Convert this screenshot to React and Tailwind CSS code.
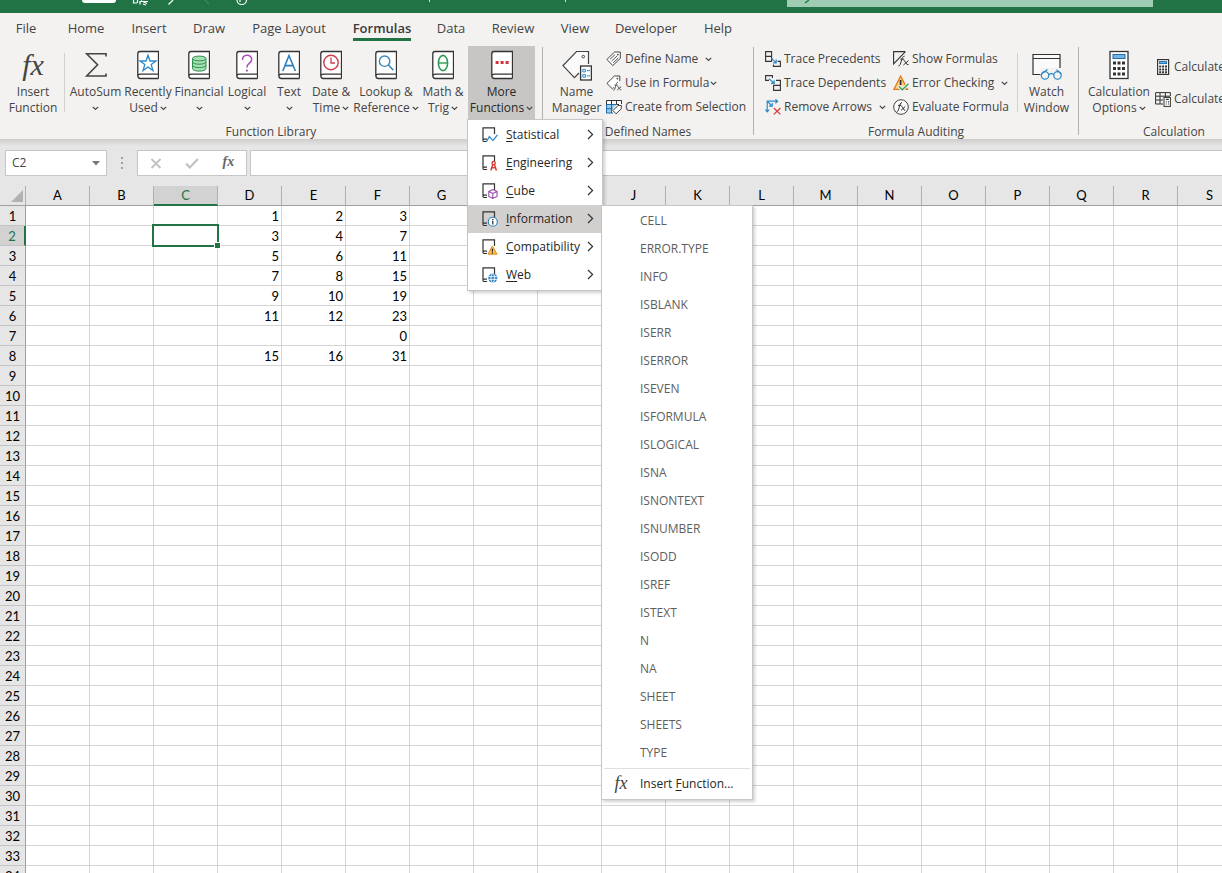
import React, { useState } from 'react';
import clsx from 'clsx';

const tabs = [
  { label: 'File', width: 'w-[52px]' },
  { label: 'Home', width: 'w-[68px]' },
  { label: 'Insert', width: 'w-[58px]' },
  { label: 'Draw', width: 'w-[62px]' },
  { label: 'Page Layout', width: 'w-[98px]' },
  { label: 'Formulas', width: 'w-[88px]' },
  { label: 'Data', width: 'w-[50px]' },
  { label: 'Review', width: 'w-[74px]' },
  { label: 'View', width: 'w-[50px]' },
  { label: 'Developer', width: 'w-[92px]' },
  { label: 'Help', width: 'w-[52px]' },
];

const columns = 'ABCDEFGHIJKLMNOPQRS'.split('');
const rows = Array.from({ length: 34 }, (_, i) => i + 1);

const values = {
  D1: 1, E1: 2, F1: 3,
  D2: 3, E2: 4, F2: 7,
  D3: 5, E3: 6, F3: 11,
  D4: 7, E4: 8, F4: 15,
  D5: 9, E5: 10, F5: 19,
  D6: 11, E6: 12, F6: 23,
  F7: 0,
  D8: 15, E8: 16, F8: 31,
};

const infoFunctions = [
  'CELL', 'ERROR.TYPE', 'INFO', 'ISBLANK', 'ISERR', 'ISERROR', 'ISEVEN', 'ISFORMULA', 'ISLOGICAL', 'ISNA',
  'ISNONTEXT', 'ISNUMBER', 'ISODD', 'ISREF', 'ISTEXT', 'N', 'NA', 'SHEET', 'SHEETS', 'TYPE',
];

const Chevron = ({ className }) => (
  <svg width="7" height="5" viewBox="0 0 7 5" className={clsx('inline-block shrink-0', className)} fill="none" stroke="#444" strokeWidth="1.2">
    <path d="M0.8 0.9 3.5 3.5 6.2 0.9" />
  </svg>
);

const Fx = ({ className }) => (
  <span className={clsx('font-["Liberation_Serif",serif] italic leading-none', className)}>fx</span>
);

/* Large book used by the function library buttons */
const Book = ({ children }) => (
  <svg width="22" height="30" viewBox="0 0 22 30" fill="none">
    <path d="M3 1.5H21.5V28.5H3.5Q0.8 28.5 0.8 25.5V4Q0.8 1.5 3 1.5Z" fill="#fff" />
    <path d="M21.5 28.5V1.5H3Q0.8 1.5 0.8 4V25.5Q0.8 28.5 3.5 28.5H21.5M21.5 24.2H3.5Q0.9 24.2 0.9 26" stroke="#333" strokeWidth="1.3" />
    {children}
  </svg>
);

const SigmaIcon = () => (
  <svg width="22" height="30" viewBox="0 0 22 30" fill="none" stroke="#444" strokeWidth="1.6">
    <path d="M21 6.5V3.8H1.6L12.6 14.8 1.6 26H21V23.4" />
  </svg>
);

const StarBook = () => (
  <Book>
    <path d="M11 5.2 13 11H19L14.2 14.6 16 20.6 11 17 6 20.6 7.8 14.6 3 11H9Z" stroke="#2b88c8" strokeWidth="1.3" />
  </Book>
);

const CoinBook = () => (
  <Book>
    <path d="M4.5 8.5V18.5C4.5 22 18 22 18 18.5V8.5" fill="#a6dfb4" stroke="#2f8f4e" />
    <ellipse cx="11.25" cy="8.5" rx="6.75" ry="2.4" fill="#a6dfb4" stroke="#2f8f4e" />
    <path d="M4.5 11.8C4.5 15 18 15 18 11.8M4.5 15.2C4.5 18.4 18 18.4 18 15.2" stroke="#2f8f4e" />
  </Book>
);

const QuestionBook = () => (
  <Book>
    <path d="M6.5 10C6.5 3.8 15.7 4 15.7 9.4 15.7 13.2 10.9 13 10.9 17.4" stroke="#a44fb5" strokeWidth="1.5" />
    <circle cx="10.9" cy="20.6" r="1.1" fill="#a44fb5" />
  </Book>
);

const LetterBook = () => (
  <Book>
    <path d="M4.8 21 11 5.5 17.4 21M7 15.6H15.2" stroke="#2b7fbd" strokeWidth="1.6" />
  </Book>
);

const ClockBook = () => (
  <Book>
    <circle cx="11" cy="12.5" r="7.2" stroke="#d13c4b" strokeWidth="1.4" />
    <path d="M11 7.5V13H15" stroke="#d13c4b" strokeWidth="1.3" />
  </Book>
);

const LookupBook = () => (
  <Book>
    <circle cx="9.6" cy="11.2" r="5.2" stroke="#3a86bd" strokeWidth="1.4" />
    <path d="M13.4 15 18.4 20.2" stroke="#3a86bd" strokeWidth="1.6" />
  </Book>
);

const ThetaBook = () => (
  <Book>
    <ellipse cx="11" cy="13" rx="4.6" ry="7.6" stroke="#2e9a52" strokeWidth="1.6" />
    <path d="M6.4 13H15.6" stroke="#2e9a52" strokeWidth="1.4" />
  </Book>
);

const DotsBook = () => (
  <Book>
    <path d="M4.6 11H7.6V14H4.6ZM9.6 11H12.6V14H9.6ZM14.6 11H17.6V14H14.6Z" fill="#d13438" />
  </Book>
);

const NameManagerIcon = () => (
  <svg width="30" height="31" viewBox="0 0 30 31" fill="none">
    <path d="M26.5 14V1.5H14.5L1 15.6 12.4 27.6 17.5 22.6V15.4H26.5Z" fill="#fafafa" />
    <path d="M26.5 14V1.5H14.5L1 15.6 12.4 27.6 17 23" stroke="#444" strokeWidth="1.2" />
    <circle cx="21.3" cy="6.6" r="1.3" stroke="#444" />
    <rect x="18.6" y="16" width="10.8" height="14" fill="#fff" stroke="#333" strokeWidth="1.3" />
    <path d="M20.8 19.3H23.4V21.9H20.8ZM20.8 24.6H23.4V27.2H20.8ZM25 20.6H28M25 25.9H28" stroke="#2b88c8" />
  </svg>
);

const WatchIcon = () => (
  <svg width="30" height="30" viewBox="0 0 30 30" fill="none">
    <path d="M1 4.5H28V18H9V24.5H1Z" fill="#fafafa" />
    <path d="M8.5 24.5H1V4.5H28V18M1 8.5H28" stroke="#333" strokeWidth="1.2" />
    <g stroke="#2b88c8" strokeWidth="1.2">
      <path d="M9.4 24 15.5 19.6M29.4 24 24.5 19.6M16.8 24.6Q19.5 22.8 22 24.6" />
      <circle cx="13" cy="25.4" r="3.7" />
      <circle cx="25.5" cy="25.4" r="3.7" />
    </g>
  </svg>
);

const CalculatorIcon = () => (
  <svg width="20" height="30" viewBox="0 0 20 30" fill="none">
    <rect x="1" y="1.5" width="18" height="27" fill="#fff" stroke="#333" strokeWidth="1.3" />
    <rect x="4" y="4.5" width="12" height="4" fill="#74b4e4" stroke="#1f6fae" />
    <path d="M4 11.5h3v3h-3zM8.5 11.5h3v3h-3zM13 11.5h3v3h-3zM4 17h3v3h-3zM8.5 17h3v3h-3zM13 17h3v3h-3zM4 22.5h3v3h-3zM8.5 22.5h3v3h-3zM13 22.5h3v3h-3z" fill="#333" />
  </svg>
);

const Small = ({ children }) => (
  <svg width="16" height="16" viewBox="0 0 16 16" fill="none" className="shrink-0">
    {children}
  </svg>
);

const TagIcon = () => (
  <Small>
    <path d="M14.3 1H8.6L0.9 8.4 6.8 14.6 14.3 7.4Z" fill="#fff" stroke="#444" />
    <circle cx="11.8" cy="3.6" r="0.9" fill="#444" />
    <path d="M4 8.2 9 3.6M5.6 10 11 5M7.2 11.8 12.4 7" stroke="#555" />
  </Small>
);

const TagFxIcon = () => (
  <Small>
    <path d="M13.8 6V1H8.4L0.9 8.4 6.4 13.8 8 12.4" fill="#fff" stroke="#444" />
    <circle cx="11.4" cy="3.6" r="0.9" fill="#444" />
    <path d="M7.4 15.4C9.6 15.8 9.4 7.2 12 7.2M8.6 10.2H11.6M11.4 11.4C13.4 11.4 13 15 15.2 15M15.2 11.6 11.2 15" stroke="#555" />
  </Small>
);

const SelectionIcon = () => (
  <Small>
    <path d="M0.5 1.5H15.5V5.5H0.5Z" fill="#fff" />
    <path d="M0.5 5.5H10.5L6 10V14H0.5Z" fill="#9ccbf0" />
    <path d="M7 14H0.5V5.5H10M0.5 9.8H7M5.5 5.5V14" stroke="#1f6fae" strokeWidth="1.1" />
    <path d="M0.5 5.5V1.5H15.5V5M5.5 1.5V5.5M10.5 1.5V5.5H13" stroke="#333" />
    <path d="M15.3 6.5H12L7 11.6 10 14.8 15.3 9.8Z" fill="#fff" stroke="#444" />
  </Small>
);

const PrecedentsIcon = () => (
  <Small>
    <path d="M0.6 0.6H6.6V10.4H0.6ZM0.6 5.4H6.6" stroke="#333" strokeWidth="1.1" />
    <path d="M6.6 7.4 11 11.6M11.2 8.6V11.8H8" stroke="#2b88c8" strokeWidth="1.2" />
    <path d="M12.6 10.4H15.4V15.4H8.4V13.4" stroke="#333" strokeWidth="1.1" />
  </Small>
);

const DependentsIcon = () => (
  <Small>
    <path d="M4 5.4H0.6V0.6H7.4V3" stroke="#333" strokeWidth="1.1" />
    <path d="M4 3.6 9 8.2M9.2 5.2V8.4H6" stroke="#2b88c8" strokeWidth="1.2" />
    <path d="M11 5.4H15.4V15.4H8.6V10.4H15.4" stroke="#333" strokeWidth="1.1" />
  </Small>
);

const RemoveArrowsIcon = () => (
  <Small>
    <path d="M2.2 12.4V2.2H12M0.4 10.6 2.2 12.8 4.2 10.6M10.4 0.4 12.6 2.2 10.4 4.2M2.2 2.2 7 7M7.2 4V7.2H4" stroke="#2b88c8" strokeWidth="1.2" />
    <path d="M8.8 9 15.4 15.4M15.4 9 8.8 15.4" stroke="#d83b3b" strokeWidth="1.3" />
  </Small>
);

const ShowFormulasIcon = () => (
  <Small>
    <path d="M12.4 0.6H0.6V12.8L12.4 0.6" stroke="#333" strokeWidth="1.1" />
    <path d="M5.4 15C8.4 15.4 8 4.6 11.6 5.2M7.4 8.2H11.2M10.6 9.4C12.8 9.2 12.4 14.2 15.6 13.8M15.6 9.6 10.4 14" stroke="#333" />
  </Small>
);

const ErrorCheckingIcon = () => (
  <Small>
    <path d="M7.6 1.2 0.9 14.4H14.4Z" fill="#fbd98f" stroke="#e07b1c" strokeWidth="1.4" />
    <path d="M7.6 5V10" stroke="#333" strokeWidth="1.8" />
    <path d="M6 11.4 9.4 14.8 15.4 8.8" stroke="#f3f2f1" strokeWidth="3.4" />
    <path d="M6 11.4 9.4 14.8 15.4 8.8" stroke="#37a35c" strokeWidth="1.4" />
  </Small>
);

const EvaluateIcon = () => (
  <Small>
    <circle cx="8" cy="8" r="7.3" fill="#fafafa" stroke="#444" />
    <path d="M3.8 12.6C6.4 13 6 3.4 9 3.6M5 6.4H8.4M8.4 7.4C10.4 7.4 10 11.6 12.2 11.4M12.2 7.6 8 11.4" stroke="#333" />
  </Small>
);

const CalcNowIcon = () => (
  <Small>
    <rect x="2.6" y="0.6" width="11" height="14.8" fill="#fff" stroke="#333" strokeWidth="1.2" />
    <rect x="4.6" y="2.6" width="7" height="2" fill="#74b4e4" stroke="#1f6fae" />
    <path d="M4.2 6.6h2v2h-2zM7.1 6.6h2v2h-2zM10 6.6h2v2h-2zM4.2 9.4h2v2h-2zM7.1 9.4h2v2h-2zM10 9.4h2v2h-2zM4.2 12.2h2v2h-2zM7.1 12.2h2v2h-2zM10 12.2h2v2h-2z" fill="#333" />
  </Small>
);

const CalcSheetIcon = () => (
  <Small>
    <path d="M15.4 5V1.6H0.6V13H8M0.6 5.2H15M0.6 9H8M5 1.6V13M10.4 1.6V6" stroke="#333" />
    <rect x="9" y="6.4" width="6.4" height="9" fill="#fff" stroke="#333" />
    <path d="M10.8 8.4h3M10.8 10.8h1M13 10.8h1M10.8 13h1M13 13h1" stroke="#333" strokeWidth="1.2" />
  </Small>
);

/* Small page used by the More Functions menu */
const Page = ({ children }) => (
  <svg width="16" height="16" viewBox="0 0 16 16" fill="none" className="shrink-0">
    <path d="M5 14.5H2.2Q1 14.5 1 13.2V0.8H12.5V7M1 12.2H5" stroke="#333" strokeWidth="1.2" />
    {children}
  </svg>
);

const moreItems = [
  { label: 'Statistical', icon: <Page><path d="M4.4 14.8 7.4 9.6 11 13.6 15.4 7.8" stroke="#2b88c8" strokeWidth="1.3" /></Page> },
  { label: 'Engineering', icon: <Page><circle cx="11.6" cy="8" r="1.6" stroke="#d83b3b" strokeWidth="1.4" /><path d="M10.8 9.6 8.8 15.4M12.4 9.6 14.4 15.4M9.4 12.8H13.8" stroke="#d83b3b" strokeWidth="1.5" /></Page> },
  { label: 'Cube', icon: <Page><path d="M10.8 6.6 15 8.4V13.4L10.8 15.4 6.8 13.4V8.4ZM6.8 8.4 10.8 10.4 15 8.4M10.8 10.4V15.4" fill="#fff" stroke="#9a4fb0" strokeWidth="1.1" /></Page> },
  { label: 'Information', icon: <Page><circle cx="10.8" cy="10.8" r="4.5" fill="#fff" stroke="#2b7fbd" strokeWidth="1.1" /><path d="M10.8 10V13.6M10.8 8V9.2" stroke="#222" strokeWidth="1.2" /></Page> },
  { label: 'Compatibility', icon: <Page><path d="M10.4 7 6 15.2H15Z" fill="#fcc24e" stroke="#e08a1c" /><path d="M10.4 9.8V12.4M10.4 13.2V14.4" stroke="#222" strokeWidth="1.2" /></Page> },
  { label: 'Web', icon: <Page><circle cx="10.8" cy="11" r="4.6" fill="#2b88c8" /><path d="M6.4 9.6H15.2M6.4 12.4H15.2" stroke="#fff" strokeWidth="0.8" /><ellipse cx="10.8" cy="11" rx="1.9" ry="4.4" stroke="#fff" strokeWidth="0.8" /></Page> },
];

const libraryButtons = [
  { icon: <SigmaIcon />, lines: ['AutoSum', ''], width: 'w-[53px]' },
  { icon: <StarBook />, lines: ['Recently', 'Used'], width: 'w-[52px]' },
  { icon: <CoinBook />, lines: ['Financial', ''], width: 'w-[50px]' },
  { icon: <QuestionBook />, lines: ['Logical', ''], width: 'w-[46px]' },
  { icon: <LetterBook />, lines: ['Text', ''], width: 'w-[38px]' },
  { icon: <ClockBook />, lines: ['Date &', 'Time'], width: 'w-[46px]' },
  { icon: <LookupBook />, lines: ['Lookup &', 'Reference'], width: 'w-[64px]' },
  { icon: <ThetaBook />, lines: ['Math &', 'Trig'], width: 'w-[50px]' },
];

const BigButton = ({ icon, lines, width, menu = true, active = false, onClick }) => (
  <button
    onClick={onClick}
    className={clsx('flex flex-col items-center pt-1 h-[73px] shrink-0 whitespace-nowrap text-xs leading-4', width, active ? 'bg-[#c8c6c4] text-[#262626]' : 'text-[#444]')}
  >
    <span className="h-[30px] flex items-center justify-center mb-1">{icon}</span>
    <span>{lines[0]}</span>
    <span className="h-4 flex items-center justify-center gap-0.5">
      {lines[1]}
      {menu && <Chevron />}
    </span>
  </button>
);

const SmallButton = ({ icon, label, menu, gap = 'ml-1', height = 'h-6' }) => (
  <button className={clsx('flex items-center gap-[3px] whitespace-nowrap text-xs text-[#444]', height)}>
    {icon}
    <span>{label}</span>
    {menu && <Chevron className={gap} />}
  </button>
);

const Group = ({ label, width, children }) => (
  <section className={clsx('flex flex-col shrink-0', width)}>
    <div className="flex h-[73px]">{children}</div>
    <div className="pt-px text-center text-xs leading-6 text-[#444]">{label}</div>
  </section>
);

const GroupDivider = () => <div className="w-px h-[88px] bg-[#b3b0ad] mt-px shrink-0" />;
const InnerDivider = () => <div className="w-px h-[59px] bg-[#d2d0ce] mt-[7px] shrink-0" />;

const TitleBar = () => (
  <header className="h-[13px] bg-[#217346] flex items-start shrink-0 overflow-hidden">
    <div className="w-[34px] h-[3px] bg-white rounded-b-full ml-[82px] shrink-0" />
    <svg width="120" height="8" viewBox="0 0 120 8" className="ml-4 shrink-0" fill="none" stroke="#fff" strokeWidth="1.2">
      <path d="M1.5 0V3H5M5.5 0V3M8 4.5V1.5H16M9 0.8 15 3.5M14 5 11 4" />
      <path d="M36.5 4.5 41 0" />
      <path d="M73 0 77 4" stroke="#3d8a5e" />
      <path d="M105 0C105 6 114.5 6 114.5 0M108 0V2" />
    </svg>
    <div className="w-px h-0.5 bg-white/80 ml-[177px] shrink-0" />
    <div className="w-px h-0.5 bg-white/80 ml-[135px] shrink-0" />
    <div className="w-[366px] h-[7px] bg-[#9fcdb3] ml-[221px] shrink-0">
      <svg width="8" height="4" viewBox="0 0 8 4" className="ml-4" stroke="#217346" strokeWidth="1.3"><path d="M2 3 6 0" /></svg>
    </div>
  </header>
);

const InfoMenu = () => (
  <div className="absolute left-full top-0 -ml-px w-[152px] py-px bg-white border border-[#c6c6c6] shadow-[2px_2px_3px_rgba(0,0,0,0.18)] z-20">
    {infoFunctions.map((name) => (
      <button key={name} className="block w-full h-7 pl-[38px] text-left text-xs text-[#605e5c]">{name}</button>
    ))}
    <div className="h-px bg-[#e1dfdd] mx-0.5 my-px" />
    <button className="flex items-center w-full h-7 text-xs text-[#262626]">
      <Fx className="w-[38px] pb-0.5 text-lg text-[#444]" />
      <span>Insert <u className="underline-offset-2">F</u>unction...</span>
    </button>
  </div>
);

const MoreMenu = () => (
  <div className="absolute left-0 -ml-px top-full w-[136px] bg-white border border-[#c6c6c6] py-px shadow-[2px_2px_3px_rgba(0,0,0,0.18)] z-10">
    {moreItems.map((item) => (
      <div key={item.label} className="relative">
        <button
          className={clsx('flex items-center w-full h-7 pl-3.5 pr-2 text-xs text-[#262626]', item.label === 'Information' && 'bg-[#d2d0ce]')}
        >
          {item.icon}
          <span className="ml-2 flex-1 text-left">
            <u className="underline-offset-2">{item.label[0]}</u>{item.label.slice(1)}
          </span>
          <svg width="7" height="11" viewBox="0 0 7 11" className="mb-0.5" fill="none" stroke="#333" strokeWidth="1.2"><path d="M1 1 5.6 5.5 1 10" /></svg>
        </button>
        {item.label === 'Information' && <InfoMenu />}
      </div>
    ))}
  </div>
);

const Ribbon = () => {
  const [open, setOpen] = useState(true);

  return (
    <div className="flex h-24 pt-[3px] bg-[#f3f2f1] shrink-0 relative z-10">
      <Group label="Function Library" width="w-[542px]">
        <BigButton icon={<Fx className="text-3xl" />} lines={['Insert', 'Function']} width="w-[64px] pl-0.5" menu={false} />
        <InnerDivider />
        <div className="flex pl-1">
          {libraryButtons.map((b) => <BigButton key={b.lines[0]} {...b} />)}
        </div>
        <div className="relative">
          <BigButton icon={<DotsBook />} lines={['More', 'Functions']} width="w-[67px]" active onClick={() => setOpen(!open)} />
          {open && <MoreMenu />}
        </div>
      </Group>
      <GroupDivider />
      <Group label="Defined Names" width="w-[210px]">
        <BigButton icon={<NameManagerIcon />} lines={['Name', 'Manager']} width="w-[63px] pl-1" menu={false} />
        <div className="flex flex-col pt-px">
          <SmallButton icon={<TagIcon />} label="Define Name" menu gap="ml-1" />
          <SmallButton icon={<TagFxIcon />} label="Use in Formula" menu gap="-ml-0.5" />
          <SmallButton icon={<SelectionIcon />} label="Create from Selection" />
        </div>
      </Group>
      <GroupDivider />
      <Group label="Formula Auditing" width="w-[324px]">
        <div className="flex flex-col w-[139px] pl-[11px] pt-px shrink-0">
          <SmallButton icon={<PrecedentsIcon />} label="Trace Precedents" />
          <SmallButton icon={<DependentsIcon />} label="Trace Dependents" />
          <SmallButton icon={<RemoveArrowsIcon />} label="Remove Arrows" menu gap="ml-1" />
        </div>
        <div className="flex flex-col w-[124px] pt-px shrink-0">
          <SmallButton icon={<ShowFormulasIcon />} label="Show Formulas" />
          <SmallButton icon={<ErrorCheckingIcon />} label="Error Checking" menu gap="ml-1" />
          <SmallButton icon={<EvaluateIcon />} label="Evaluate Formula" />
        </div>
        <InnerDivider />
        <BigButton icon={<WatchIcon />} lines={['Watch', 'Window']} width="w-[57px]" menu={false} />
      </Group>
      <GroupDivider />
      <Group label="Calculation" width="w-[190px]">
        <BigButton icon={<CalculatorIcon />} lines={['Calculation', 'Options']} width="w-[76px] pl-1" />
        <div className="flex flex-col pt-[5px]">
          <SmallButton icon={<CalcNowIcon />} label="Calculate Now" height="h-8" />
          <SmallButton icon={<CalcSheetIcon />} label="Calculate Sheet" height="h-8" />
        </div>
      </Group>
    </div>
  );
};

const FormulaBar = () => (
  <div className="flex h-[47px] pt-[11px] pl-[5px] bg-linear-to-b from-[#cfcdcb] to-[#e6e6e6] to-15% shrink-0">
    <div className="flex items-center w-[102px] h-[26px] bg-white border border-[#c6c6c6] px-1.5 shrink-0">
      <input aria-label="Name box" defaultValue="C2" className="w-full min-w-0 text-xs text-[#444] outline-none" />
      <svg width="8" height="5" viewBox="0 0 8 5" className="shrink-0" fill="#777"><path d="M0 0H8L4 4.6Z" /></svg>
    </div>
    <div className="flex flex-col justify-center items-center gap-[3px] w-[30px] h-[26px] shrink-0">
      <span className="size-0.5 bg-[#a0a0a0]" />
      <span className="size-0.5 bg-[#a0a0a0]" />
      <span className="size-0.5 bg-[#a0a0a0]" />
    </div>
    <div className="flex items-center justify-around w-[110px] h-[26px] bg-white border border-[#c6c6c6] shrink-0">
      <button aria-label="Cancel">
        <svg width="12" height="11" viewBox="0 0 12 11" stroke="#c2c2c2" strokeWidth="1.8"><path d="M1.5 1 10.5 10M10.5 1 1.5 10" /></svg>
      </button>
      <button aria-label="Enter">
        <svg width="14" height="11" viewBox="0 0 14 11" fill="none" stroke="#c2c2c2" strokeWidth="2.2"><path d="M1 5.6 4.8 9.4 13 1" /></svg>
      </button>
      <button aria-label="Insert function" className="flex"><Fx className="pb-0.5 text-sm font-bold text-[#666]" /></button>
    </div>
    <input aria-label="Formula bar" className="flex-1 min-w-0 ml-[3px] h-[26px] px-2 bg-white border border-r-0 border-[#c6c6c6] text-xs outline-none" />
  </div>
);

const Sheet = () => (
  <div className="flex-1 min-h-0 overflow-hidden bg-white">
    <table className="table-fixed border-separate border-spacing-0 w-[1242px] font-[Lato,sans-serif] text-[13px] leading-[17px] text-black">
      <thead>
        <tr className="bg-[#e6e6e6]">
          <th className="w-[26px] h-5 p-0 border-r border-b border-r-[#b1b1b1] border-b-[#9f9f9f]">
            <svg width="13" height="13" viewBox="0 0 13 13" className="ml-auto mr-0.5" fill="#b2b2b2"><path d="M13 1V13H1Z" /></svg>
          </th>
          {columns.map((c) => (
            <th
              key={c}
              className={clsx('w-16 h-5 p-0 font-normal border-r border-r-[#b1b1b1]', c === 'C' ? 'bg-[#d2d2d2] text-[#217346] border-b-2 border-b-[#217346]' : 'border-b border-b-[#9f9f9f]')}
            >
              {c}
            </th>
          ))}
        </tr>
      </thead>
      <tbody>
        {rows.map((r) => (
          <tr key={r}>
            <th
              className={clsx('h-5 px-0 pt-0.5 pb-0 font-normal border-b border-b-[#c4c4c4]', r === 2 ? 'bg-[#d2d2d2] text-[#217346] border-r-2 border-r-[#217346]' : 'bg-[#e6e6e6] border-r border-r-[#9f9f9f]')}
            >
              {r}
            </th>
            {columns.map((c) => (
              <td
                key={c}
                className={clsx('h-5 pt-0.5 pb-0 pl-0 pr-0.5 text-right border-r border-b border-[#d4d4d4]', c + r === 'C2' && 'relative')}
              >
                {values[c + r]}
                {c + r === 'C2' && (
                  <span className="absolute -inset-0.5 border-2 border-[#217346] z-10">
                    <span className="absolute -right-1 -bottom-1 size-[7px] bg-[#217346] border border-white" />
                  </span>
                )}
              </td>
            ))}
          </tr>
        ))}
      </tbody>
    </table>
  </div>
);

export default function App() {
  return (
    <div className="flex flex-col h-screen overflow-hidden font-['Open_Sans',sans-serif] bg-[#e6e6e6]">
      <TitleBar />
      <nav className="flex h-[30px] bg-[#f3f2f1] shrink-0 text-[13px] text-[#444]">
        {tabs.map((tab) => (
          <button key={tab.label} className={clsx('flex justify-center shrink-0 whitespace-nowrap', tab.width)}>
            <span className={clsx('h-7 leading-[30px]', tab.label === 'Formulas' && 'font-semibold text-[#3b3a39] border-b-3 border-[#217346]')}>
              {tab.label}
            </span>
          </button>
        ))}
      </nav>
      <Ribbon />
      <FormulaBar />
      <Sheet />
    </div>
  );
}
